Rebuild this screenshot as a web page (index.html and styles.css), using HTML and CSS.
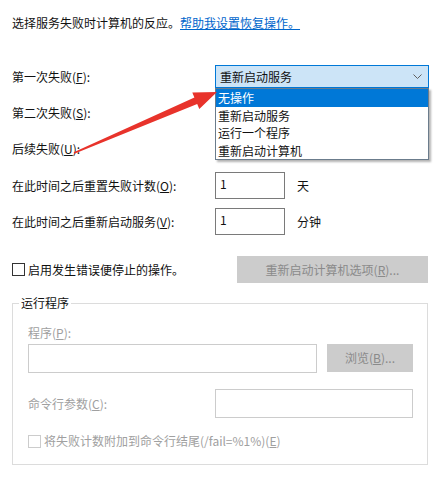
FILE: index.html
```html
<!DOCTYPE html>
<html lang="zh-CN">
<head>
    <meta charset="UTF-8">
    <title>恢复</title>
    <link rel="stylesheet" href="styles.css">
</head>
<body>

<div class="page">
    <p class="intro">选择服务失败时计算机的反应。<a href="#" class="help-link">帮助我设置恢复操作。</a></p>

    <div class="fail-grid">
        <div class="label">第一次失败(<u>F</u>):</div>
        <div class="combo-wrap">
            <div class="combo">
                <span>重新启动服务</span>
                <svg class="chevron" width="9" height="6" viewBox="0 0 9 6"><polyline points="0.5,0.5 4.5,4.5 8.5,0.5" fill="none" stroke="#606060" stroke-width="1"/></svg>
            </div>
            <ul class="combo-list">
                <li class="selected">无操作</li>
                <li>重新启动服务</li>
                <li>运行一个程序</li>
                <li>重新启动计算机</li>
            </ul>
        </div>

        <div class="label">第二次失败(<u>S</u>):</div>
        <div></div>

        <div class="label">后续失败(<u>U</u>):</div>
        <div></div>

        <div class="label">在此时间之后重置失败计数(<u>O</u>):</div>
        <div class="field-row">
            <div class="num-box">1</div>
            <span class="unit">天</span>
        </div>

        <div class="label">在此时间之后重新启动服务(<u>V</u>):</div>
        <div class="field-row">
            <div class="num-box">1</div>
            <span class="unit">分钟</span>
        </div>
    </div>

    <div class="check-row">
        <label class="check">
            <span class="box"></span>
            启用发生错误便停止的操作。
        </label>
        <button class="btn-disabled restart-btn" disabled>重新启动计算机选项(<u>R</u>)...</button>
    </div>

    <fieldset class="group">
        <legend>运行程序</legend>
        <div class="muted prog-label">程序(<u>P</u>):</div>
        <div class="prog-row">
            <div class="text-box prog-box"></div>
            <button class="btn-disabled browse-btn" disabled>浏览(<u>B</u>)...</button>
        </div>
        <div class="args-row">
            <div class="muted">命令行参数(<u>C</u>):</div>
            <div class="text-box args-box"></div>
        </div>
        <label class="check muted fail-check">
            <span class="box box-off"></span>
            将失败计数附加到命令行结尾(/fail=%1%)(<u>E</u>)
        </label>
    </fieldset>
</div>

<!-- 标注箭头 -->
<svg class="annot" width="448" height="480" viewBox="0 0 448 480">
    <polygon points="73.7,152.3 194.4,97.5 192.3,92.4 217,92 199.3,109 197.2,103.9 74.3,153.7" fill="#e8332b"/>
</svg>

</body>
</html>
```

FILE: styles.css
```css
body {
    margin: 0;
    background: #fff;
    font-family: "Noto Sans CJK SC", "Liberation Sans", sans-serif;
    font-size: 12px;
    line-height: 16px;
    color: #111;
}
.page {
    width: 416px;
    padding: 0 20px 0 12px;
}
.intro {
    margin: 15px 0 0 0;
}
.help-link {
    color: #0066cc;
    text-decoration: underline;
}
.fail-grid {
    display: grid;
    grid-template-columns: 203px 1fr;
    grid-template-rows: 37px 36px 36px 37px 35px;
    margin-top: 27px;
    align-items: center;
}
.combo-wrap {
    position: relative;
}
.combo {
    box-sizing: border-box;
    height: 23px;
    width: 214px;
    background: #cce4f7;
    border: 1px solid #0078d7;
    display: flex;
    align-items: center;
    justify-content: space-between;
    padding: 0 6px 0 4px;
}
.chevron {
    display: block;
}
.combo-list {
    position: absolute;
    top: 100%;
    left: 0;
    width: 214px;
    box-sizing: border-box;
    margin: 0;
    padding: 0;
    list-style: none;
    background: #fff;
    border: 1px solid #6b7c8c;
    box-shadow: 2px 2px 2px rgba(0,0,0,0.3);
    z-index: 2;
}
.combo-list li {
    height: 17.5px;
    line-height: 17.5px;
    padding-left: 2px;
}
.combo-list li.selected {
    background: #0078d7;
    color: #fff;
}
.field-row {
    display: flex;
    align-items: center;
}
.num-box {
    box-sizing: border-box;
    width: 70px;
    height: 27px;
    border: 1px solid #7a7a7a;
    padding: 3px 0 0 4px;
}
.unit {
    margin-left: 12px;
}
.check-row {
    display: flex;
    justify-content: space-between;
    align-items: center;
    margin-top: 17px;
    height: 27px;
}
.check {
    display: flex;
    align-items: center;
}
.box {
    box-sizing: border-box;
    width: 13px;
    height: 13px;
    border: 1px solid #333;
    margin-right: 3px;
}
.box-off {
    border-color: #cccccc;
}
.btn-disabled {
    font-family: inherit;
    font-size: 12px;
    line-height: 16px;
    background: #cccccc;
    color: #8a8a8a;
    border: 1px solid #cccccc;
    padding: 0;
}
.restart-btn {
    width: 191px;
    height: 27px;
}
.group {
    margin: 12px 0 0 0;
    border: 1px solid #dcdcdc;
    padding: 14px 14px 15px 15px;
}
.group legend {
    padding: 0 2px;
    margin-left: -9px;
    color: #111;
}
.muted {
    color: #a0a0a0;
}
.prog-row {
    display: flex;
    justify-content: space-between;
    margin-top: 3px;
}
.text-box {
    box-sizing: border-box;
    border: 1px solid #cccccc;
    background: #fff;
}
.prog-box {
    width: 289px;
    height: 29px;
}
.browse-btn {
    width: 86px;
    height: 28px;
}
.args-row {
    display: grid;
    grid-template-columns: 187px 1fr;
    align-items: center;
    margin-top: 16px;
}
.args-box {
    height: 29px;
}
.fail-check {
    margin-top: 15px;
}
.annot {
    position: absolute;
    top: 0;
    left: 0;
    pointer-events: none;
    z-index: 3;
}
```
